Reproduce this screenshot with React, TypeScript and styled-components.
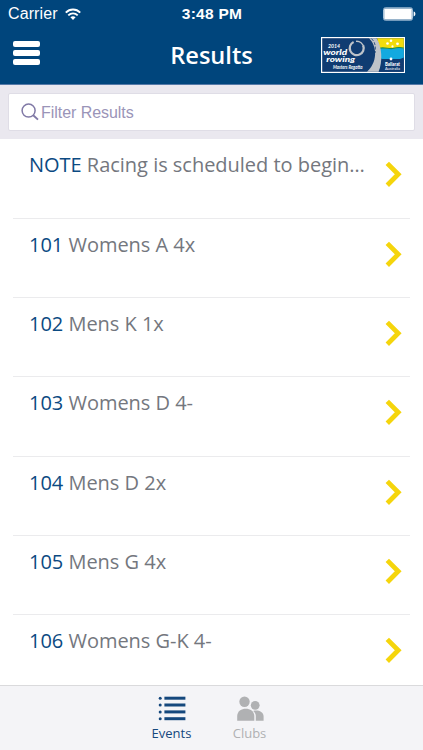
import React from 'react';
import styled, {createGlobalStyle} from 'styled-components';

const GlobalStyle = createGlobalStyle`
    body {
        margin: 0;
        background: #fff;
        font-family: 'Open Sans', sans-serif;
    }

    * {
        box-sizing: border-box;
    }
`;

const Screen = styled.div`
    display: flex;
    flex-direction: column;
    width: 423px;
    height: 750px;
    overflow: hidden;
    background: #fff;
`;

const Header = styled.header`
    flex: none;
    height: 85px;
    background: #00457c;
    border-bottom: 1px solid #5579a8;
    color: #fff;
`;

const StatusBar = styled.div`
    display: grid;
    grid-template-columns: 1fr auto 1fr;
    align-items: center;
    height: 28px;
    padding: 0 7px 0 8px;
    font-family: 'Liberation Sans', sans-serif;
    font-size: 16px;
`;

const Carrier = styled.div`
    display: flex;
    align-items: center;
    gap: 7px;
    letter-spacing: 0.1px;
`;

const Clock = styled.div`
    font-weight: bold;
    font-size: 15.5px;
    letter-spacing: 0.25px;
`;

const BatterySlot = styled.div`
    display: flex;
    justify-content: flex-end;
`;

const NavBar = styled.div`
    display: grid;
    grid-template-columns: 1fr auto 1fr;
    align-items: center;
    height: 54px;
    padding: 0 18px 0 18px;
`;

const MenuButton = styled.button`
    display: flex;
    flex-direction: column;
    gap: 3px;
    width: 27px;
    padding: 0;
    margin: -4px 0 0 -5px;
    border: none;
    background: none;
`;

const MenuBar = styled.span`
    height: 6px;
    border-radius: 2px;
    background: #fff;
`;

const Title = styled.h1`
    margin: 0;
    font-size: 23.6px;
    font-weight: 600;
    line-height: 54px;
`;

const LogoSlot = styled.div`
    display: flex;
    justify-content: flex-end;
`;

const FilterBar = styled.div`
    flex: none;
    height: 54px;
    padding: 8px 8px 0 8px;
    background: #eae8ef;
`;

const FilterBox = styled.label`
    display: flex;
    align-items: center;
    gap: 2px;
    height: 38px;
    padding-left: 12px;
    border: 1px solid #dfdde6;
    border-radius: 2px;
    background: #fff;
`;

const FilterInput = styled.input`
    flex: 1;
    padding: 2px 0 0;
    border: none;
    outline: none;
    background: none;
    font-family: 'Liberation Sans', sans-serif;
    font-size: 16px;
    letter-spacing: -0.05px;

    &::placeholder {
        color: #9a94b8;
        opacity: 1;
    }
`;

const EventList = styled.ul`
    flex: 1;
    min-height: 0;
    margin: 0;
    padding: 0 13px;
    list-style: none;
    overflow: hidden;
`;

const EventRow = styled.li`
    display: flex;
    align-items: flex-start;
    justify-content: space-between;
    height: 79.2px;
    padding: 12px 8px 0 16px;
    border-bottom: 1px solid #ebebed;

    &:first-child {
        height: 80px;
    }

    &:last-child {
        border-bottom: none;
    }

    svg {
        flex: none;
        margin-top: 10px;
    }
`;

const EventText = styled.div`
    color: #74777e;
    font-size: 20px;
    letter-spacing: -0.02px;
    line-height: 28px;
    white-space: nowrap;
`;

const EventCode = styled.span`
    color: #0b4a82;
`;

const TabBar = styled.nav`
    display: flex;
    flex: none;
    justify-content: center;
    height: 65px;
    padding: 10px 2px 0 0;
    border-top: 1px solid #dadadc;
    background: #f4f4f7;
`;

const Tab = styled.button<{$active?: boolean}>`
    display: flex;
    flex-direction: column;
    align-items: center;
    width: 78px;
    padding: 0;
    border: none;
    background: none;
    color: ${({$active}) => ($active ? '#15487d' : '#b0b1b3')};
    font-family: 'Open Sans', sans-serif;
    font-size: 13px;
    line-height: 18px;

    svg {
        margin-bottom: 3px;
    }
`;

const WifiIcon = () => (
    <svg width="16" height="13" viewBox="0 0 16 13" fill="none" stroke="#fff" strokeWidth="1.9">
        <path d="M0.8 4.7C4.8 0.5 11.2 0.5 15.2 4.7"/>
        <path d="M3.3 7.4C6 4.7 10 4.7 12.7 7.4"/>
        <path d="M5.4 9.3C7 7.9 9 7.9 10.6 9.3L8 12Z" fill="#fff" stroke="none"/>
    </svg>
);

const BatteryIcon = () => (
    <svg width="33" height="14" viewBox="0 0 33 14">
        <rect x="0.5" y="0.8" width="29" height="12.4" rx="1.8" fill="#00457c" stroke="#a9c3d9"/>
        <rect x="1.2" y="1.5" width="27.6" height="11" rx="0.8" fill="#fff"/>
        <path d="M30.6 4.6C33 5 33 9 30.6 9.4Z" fill="#fff"/>
    </svg>
);

const RegattaLogo = () => (
    <svg width="84" height="36" viewBox="0 0 84 36">
        <rect width="84" height="36" fill="#fff"/>
        <rect x="1.2" y="1.2" width="81.6" height="33.6" fill="#103c72"/>
        <path d="M56 1.2H82.8V12H59Z" fill="#f2dc0c"/>
        <path d="M58 11.5C64 9.8 68 13 73 11.5S80 11 82.8 11.2V22H58Z" fill="#13a9df"/>
        <path d="M58 11.3C64 9.6 68 12.8 73 11.3S80 10.8 82.8 11" fill="none" stroke="#168a58" strokeWidth="1.1"/>
        <path d="M58 20.5C64 23.8 75 24.5 82.8 20.5V34.8H58Z" fill="#103c72"/>
        <path d="M48 1.2C57 10 56 26 46 34.8H57.5C62 25 61 9 55.5 1.2Z" fill="#bfc3c9"/>
        <path d="M50.5 1.6C54.2 5 55 10 54 16" fill="none" stroke="#103c72" strokeWidth="0.8" strokeDasharray="3 1.5"/>
        <path d="M32.6 4.9A7 7 0 1 0 42.2 8.5" fill="none" stroke="#bfc3c9" strokeWidth="2.2"/>
        <path d="M35 4.3A6.9 6.9 0 0 1 42.6 10.5" fill="none" stroke="#bfc3c9" strokeWidth="1.3"/>
        <g fill="#fff">
            <circle cx="66.5" cy="6.5" r="1.3"/>
            <circle cx="70" cy="3.8" r="1.3"/>
            <circle cx="76.5" cy="6.8" r="1.4"/>
            <circle cx="71.5" cy="9.4" r="1.1"/>
            <circle cx="70" cy="22" r="1.4"/>
        </g>
        <g fill="#fff" fontFamily="Lato, sans-serif" fontStyle="italic">
            <text x="7" y="11" fontSize="5.4" fontWeight="bold" textLength="12" lengthAdjust="spacingAndGlyphs">2014</text>
            <text x="2.2" y="18.2" fontSize="8" fontWeight="900" textLength="24" lengthAdjust="spacingAndGlyphs">world</text>
            <text x="5.2" y="25.4" fontSize="8" fontWeight="900" textLength="29" lengthAdjust="spacingAndGlyphs">rowing</text>
            <text x="12" y="31.6" fontSize="4.8" fontWeight="bold" textLength="29.5" lengthAdjust="spacingAndGlyphs">Masters Regatta</text>
        </g>
        <g fill="#fff" fontFamily="Lato, sans-serif">
            <text x="64" y="28.6" fontSize="4.6" fontWeight="900" textLength="15" lengthAdjust="spacingAndGlyphs">Ballarat</text>
            <text x="64" y="33" fontSize="4.2" textLength="15" lengthAdjust="spacingAndGlyphs">Australia</text>
        </g>
    </svg>
);

const SearchIcon = () => (
    <svg width="18" height="18" viewBox="0 0 18 18" fill="none" stroke="#8079a6" strokeWidth="1.5">
        <circle cx="7.6" cy="7.6" r="6.5"/>
        <path d="M12.2 12.2L17 16.6" strokeWidth="1.9"/>
    </svg>
);

const ChevronIcon = () => (
    <svg width="17" height="27" viewBox="0 0 17 27" fill="none" stroke="#f5d50c" strokeWidth="4.8">
        <path d="M2.3 2.4L13.2 13.3L2.3 24.2"/>
    </svg>
);

const ListIcon = () => (
    <svg width="28" height="25" viewBox="0 0 28 25" fill="currentColor">
        {[2.2, 9, 15.9, 22.7].map(y => (
            <React.Fragment key={y}>
                <circle cx="2.2" cy={y} r="1.5"/>
                <rect x="6.4" y={y - 1.5} width="21" height="3"/>
            </React.Fragment>
        ))}
    </svg>
);

const PeopleIcon = () => (
    <svg width="28" height="25" viewBox="0 0 28 25" fill="currentColor">
        <circle cx="8.5" cy="5.7" r="5.2"/>
        <path d="M1.2 24.8V20C1.2 10.2 18.3 10.2 18.3 20V24.8Z"/>
        <circle cx="19.2" cy="9.3" r="4.4"/>
        <path d="M19.8 24.8V20C19.8 17.8 18.8 16.2 17.2 14.9C21.5 13.6 27.6 15.5 27.6 20.3V24.8Z"/>
    </svg>
);

const events = [
    {code: 'NOTE', name: 'Racing is scheduled to begin…'},
    {code: '101', name: 'Womens A 4x'},
    {code: '102', name: 'Mens K 1x'},
    {code: '103', name: 'Womens D 4-'},
    {code: '104', name: 'Mens D 2x'},
    {code: '105', name: 'Mens G 4x'},
    {code: '106', name: 'Womens G-K 4-'}
];

const App = () => (
    <Screen>
        <GlobalStyle/>
        <Header>
            <StatusBar>
                <Carrier>Carrier <WifiIcon/></Carrier>
                <Clock>3:48 PM</Clock>
                <BatterySlot><BatteryIcon/></BatterySlot>
            </StatusBar>
            <NavBar>
                <MenuButton aria-label="Menu">
                    <MenuBar/>
                    <MenuBar/>
                    <MenuBar/>
                </MenuButton>
                <Title>Results</Title>
                <LogoSlot><RegattaLogo/></LogoSlot>
            </NavBar>
        </Header>
        <FilterBar>
            <FilterBox>
                <SearchIcon/>
                <FilterInput placeholder="Filter Results"/>
            </FilterBox>
        </FilterBar>
        <EventList>
            {events.map(({code, name}) => (
                <EventRow key={code}>
                    <EventText><EventCode>{code}</EventCode> {name}</EventText>
                    <ChevronIcon/>
                </EventRow>
            ))}
        </EventList>
        <TabBar>
            <Tab $active><ListIcon/>Events</Tab>
            <Tab><PeopleIcon/>Clubs</Tab>
        </TabBar>
    </Screen>
);

export default App;
